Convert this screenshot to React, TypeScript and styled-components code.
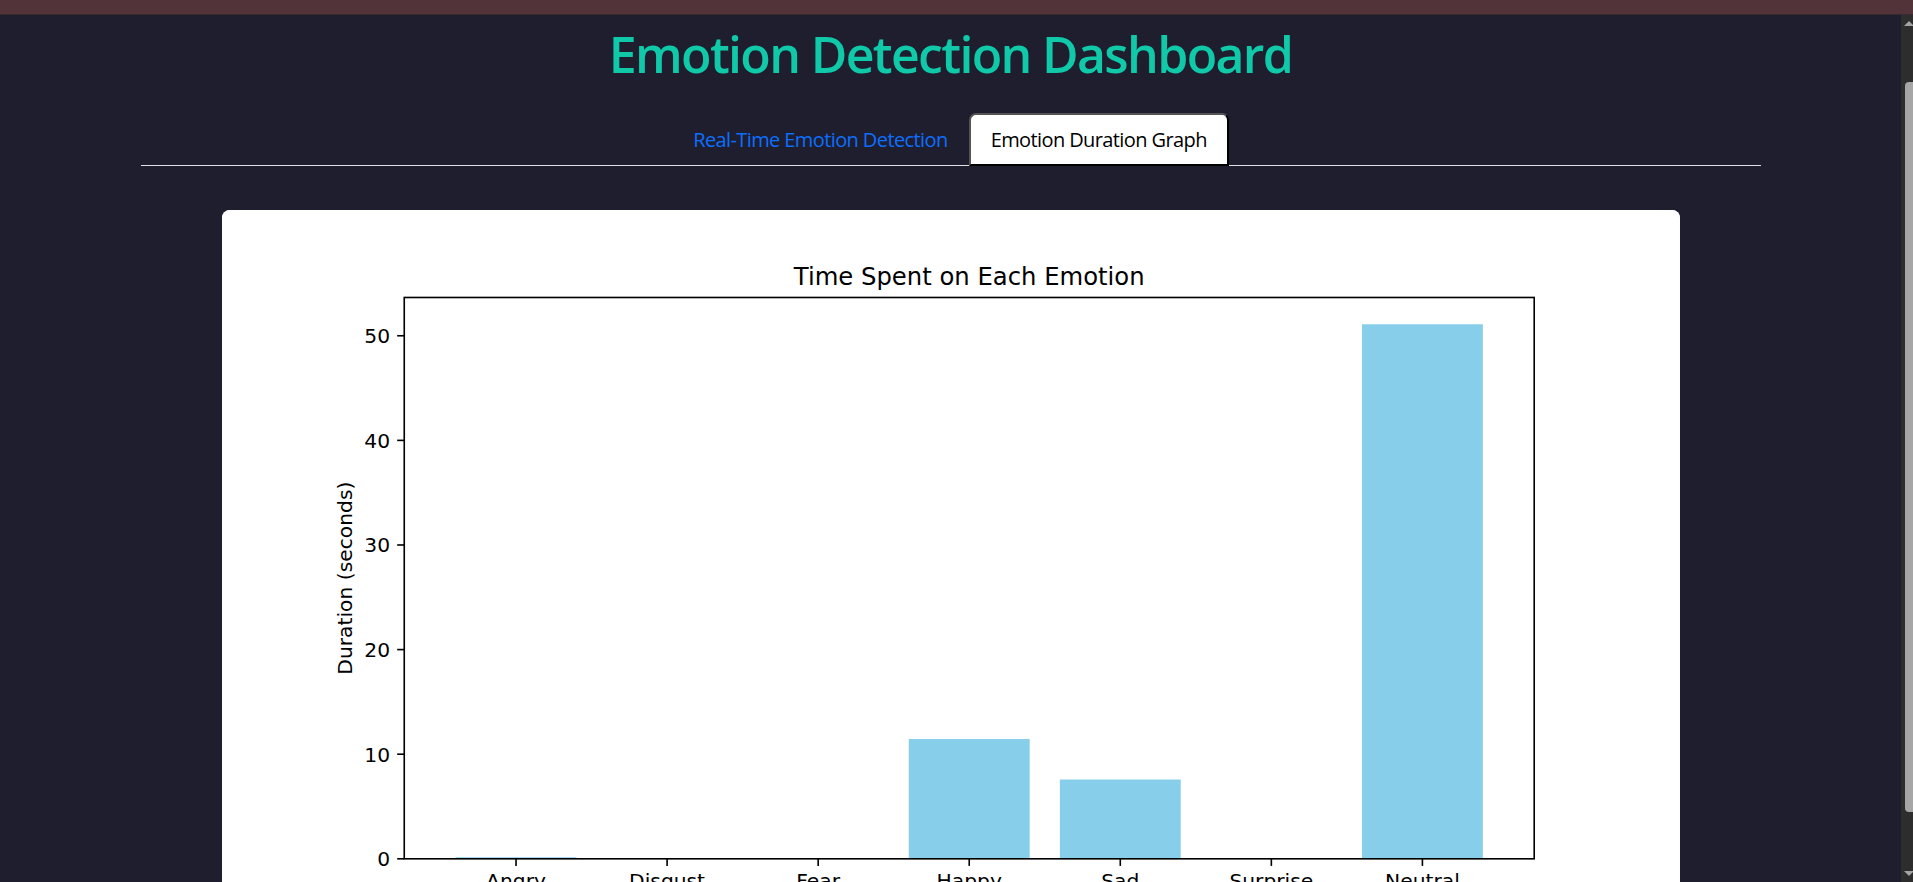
import React, { useState } from "react";
import styled, { createGlobalStyle } from "styled-components";

// emotion -> seconds spent, read off the duration graph
const durations: { label: string; value: number }[] = [
  { label: "Angry", value: 0.15 },
  { label: "Disgust", value: 0 },
  { label: "Fear", value: 0 },
  { label: "Happy", value: 11.45 },
  { label: "Sad", value: 7.58 },
  { label: "Surprise", value: 0 },
  { label: "Neutral", value: 51.1 },
];

const GlobalStyle = createGlobalStyle`
  html, body {
    margin: 0;
    padding: 0;
    height: 100%;
    overflow: hidden;
    background: #1e1e2f;
  }
  #root {
    height: 100%;
  }
`;

const Window = styled.div`
  display: flex;
  flex-direction: column;
  height: 100vh;
`;

const ChromeStrip = styled.div`
  height: 14px;
  flex-shrink: 0;
  background: #52333a;
  border-bottom: 1px solid #3a2a30;
`;

const Viewport = styled.div`
  flex: 1;
  min-height: 0;
  display: flex;
`;

const Page = styled.main`
  flex: 1;
  min-width: 0;
  overflow: hidden;
  background: #1e1e2f;
  padding-top: 9px;
  font-family: "Open Sans", "Noto Sans", sans-serif;
`;

const Container = styled.div`
  max-width: 1620px;
  margin: 0 auto;
  padding: 0 15px;
`;

const Title = styled.h1`
  margin: 0 0 29px;
  text-align: center;
  font-size: 50px;
  line-height: 60px;
  font-weight: 600;
  letter-spacing: -1.65px;
  color: #10c9a9;
`;

const Tabs = styled.nav`
  display: flex;
  justify-content: center;
  border-bottom: 1px solid #dee2e6;
`;

const Tab = styled.button<{ $active?: boolean }>`
  margin-bottom: -1px;
  padding: 10px 20px 9px;
  font-family: inherit;
  font-size: 20px;
  line-height: 30px;
  letter-spacing: -0.6px;
  cursor: pointer;
  border: 1px solid ${(p) => (p.$active ? "#dee2e6 #dee2e6 #fff" : "transparent")};
  border-radius: 7px 7px 0 0;
  background: ${(p) => (p.$active ? "#fff" : "transparent")};
  color: ${(p) => (p.$active ? "#000" : "#0d6efd")};
`;

const Card = styled.section`
  width: 90%;
  margin: 44px auto 0;
  background: #fff;
  border-radius: 8px;
  overflow: hidden;
`;

const ChartSvg = styled.svg`
  display: block;
  width: 100%;
  height: auto;
`;

const Scrollbar = styled.div`
  width: 12px;
  flex-shrink: 0;
  display: flex;
  flex-direction: column;
  background: #2d2d2d;
`;

const ArrowBox = styled.div`
  height: 17px;
  display: flex;
  align-items: center;
  justify-content: center;
  padding-left: 3px;
`;

const Arrow = styled.span<{ $down?: boolean }>`
  width: 0;
  height: 0;
  border-left: 5px solid transparent;
  border-right: 5px solid transparent;
  ${(p) => (p.$down ? "border-top: 5px solid #a3a3a3;" : "border-bottom: 5px solid #a3a3a3;")}
`;

const Thumb = styled.div`
  margin: 50px 0 0 4px;
  height: 730px;
  background: #a6a6a6;
  border-radius: 4px 0 0 4px;
`;

const Spacer = styled.div`
  flex: 1;
`;

// matplotlib-style bar chart, figsize 10x5 at 100 dpi
const FIG_W = 1000;
const FIG_H = 500;
const AX = { left: 125, right: 900, top: 60, bottom: 445 };
const X_MIN = -0.74;
const X_MAX = 6.74;
const Y_MAX = 53.66;
const TICK = 4.86;
const FONT = 13.89;

const sx = (v: number) => AX.left + ((v - X_MIN) / (X_MAX - X_MIN)) * (AX.right - AX.left);
const sy = (v: number) => AX.bottom - (v / Y_MAX) * (AX.bottom - AX.top);

const DurationChart: React.FC = () => {
  const yTicks = [0, 10, 20, 30, 40, 50];
  return (
    <ChartSvg viewBox={`0 0 ${FIG_W} ${FIG_H}`} fontFamily="'DejaVu Sans', sans-serif">
      <rect x={0} y={0} width={FIG_W} height={FIG_H} fill="#fff" />
      {durations.map((d, i) => (
        <rect
          key={d.label}
          x={sx(i - 0.4)}
          y={sy(d.value)}
          width={sx(i + 0.4) - sx(i - 0.4)}
          height={AX.bottom - sy(d.value)}
          fill="#87ceeb"
        />
      ))}
      <rect
        x={AX.left}
        y={AX.top}
        width={AX.right - AX.left}
        height={AX.bottom - AX.top}
        fill="none"
        stroke="#000"
        strokeWidth={1.11}
      />
      {yTicks.map((t) => (
        <g key={t}>
          <line x1={AX.left - TICK} x2={AX.left} y1={sy(t)} y2={sy(t)} stroke="#000" strokeWidth={1.11} />
          <text x={AX.left - TICK * 2} y={sy(t) + 5.05} fontSize={FONT} textAnchor="end" fill="#000">
            {t}
          </text>
        </g>
      ))}
      {durations.map((d, i) => (
        <g key={d.label}>
          <line x1={sx(i)} x2={sx(i)} y1={AX.bottom} y2={AX.bottom + TICK} stroke="#000" strokeWidth={1.11} />
          <text x={sx(i)} y={AX.bottom + TICK * 2 + 10.2} fontSize={FONT} textAnchor="middle" fill="#000">
            {d.label}
          </text>
        </g>
      ))}
      <text
        transform={`translate(89.4 ${(AX.top + AX.bottom) / 2}) rotate(-90)`}
        fontSize={FONT}
        textAnchor="middle"
        fill="#000"
      >
        Duration (seconds)
      </text>
      <text x={(AX.left + AX.right) / 2} y={51.67} fontSize={16.67} textAnchor="middle" fill="#000">
        Time Spent on Each Emotion
      </text>
    </ChartSvg>
  );
};

export default function App() {
  const [tab, setTab] = useState<"live" | "graph">("graph");
  return (
    <>
      <GlobalStyle />
      <Window>
        <ChromeStrip />
        <Viewport>
          <Page>
            <Container>
              <Title>Emotion Detection Dashboard</Title>
              <Tabs>
                <Tab $active={tab === "live"} onClick={() => setTab("live")}>
                  Real-Time Emotion Detection
                </Tab>
                <Tab $active={tab === "graph"} onClick={() => setTab("graph")}>
                  Emotion Duration Graph
                </Tab>
              </Tabs>
              <Card>
                <DurationChart />
              </Card>
            </Container>
          </Page>
          <Scrollbar>
            <ArrowBox>
              <Arrow />
            </ArrowBox>
            <Thumb />
            <Spacer />
            <ArrowBox>
              <Arrow $down />
            </ArrowBox>
          </Scrollbar>
        </Viewport>
      </Window>
    </>
  );
}
